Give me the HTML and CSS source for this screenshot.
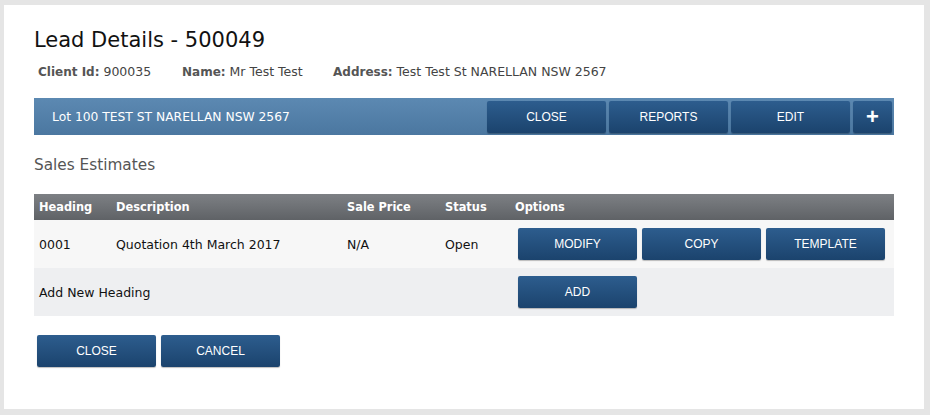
FILE: index.html
```html
<!DOCTYPE html>
<html lang="en">
<head>
    <meta charset="UTF-8">
    <meta name="viewport" content="width=device-width, initial-scale=1.0">
    <title>Lead Details - 500049</title>
    <link rel="stylesheet" href="styles.css">
</head>
<body>
    <div class="panel">
        <h1 class="titulo">Lead Details - 500049</h1>
        <div class="info">
            <span class="info-cliente"><b>Client Id:</b> 900035</span>
            <span class="info-nombre"><b>Name:</b> Mr Test Test</span>
            <span><b>Address:</b> Test Test St NARELLAN NSW 2567</span>
        </div>

        <!-- Barra del lote -->
        <div class="barra">
            <div class="barra-texto">Lot 100 TEST ST NARELLAN NSW 2567</div>
            <div class="barra-botones">
                <button class="btn">CLOSE</button>
                <button class="btn">REPORTS</button>
                <button class="btn">EDIT</button>
                <button class="btn btn-mas">+</button>
            </div>
        </div>

        <h2 class="subtitulo">Sales Estimates</h2>

        <table class="tabla">
            <thead>
                <tr>
                    <th class="col-heading">Heading</th>
                    <th class="col-desc">Description</th>
                    <th class="col-precio">Sale Price</th>
                    <th class="col-status">Status</th>
                    <th>Options</th>
                </tr>
            </thead>
            <tbody>
                <tr class="fila">
                    <td>0001</td>
                    <td>Quotation 4th March 2017</td>
                    <td>N/A</td>
                    <td>Open</td>
                    <td class="opciones">
                        <button class="btn">MODIFY</button>
                        <button class="btn">COPY</button>
                        <button class="btn">TEMPLATE</button>
                    </td>
                </tr>
                <tr class="fila fila-nueva">
                    <td colspan="4">Add New Heading</td>
                    <td class="opciones">
                        <button class="btn">ADD</button>
                    </td>
                </tr>
            </tbody>
        </table>

        <div class="pie">
            <button class="btn">CLOSE</button>
            <button class="btn">CANCEL</button>
        </div>
    </div>
</body>
</html>
```

FILE: styles.css
```css
body {
    margin: 0;
    padding: 5px 0 0 4px;
    background-color: #e5e5e5;
    font-family: "DejaVu Sans", "Noto Sans", sans-serif;
    color: #222;
}
.panel {
    width: 920px;
    height: 404px;
    box-sizing: border-box;
    background-color: #fff;
    padding: 22px 30px 0 30px;
}
.titulo {
    font-size: 21px;
    font-weight: normal;
    margin: 0;
    color: #111;
    line-height: 26px;
}
.info {
    margin: 11px 0 0 4px;
    font-size: 12.5px;
    color: #444;
    display: flex;
}
.info b {
    color: #555;
    font-size: 12px;
}
.info-cliente { width: 144px; }
.info-nombre { width: 151px; }
.barra {
    margin-top: 19px;
    height: 37px;
    width: 860px;
    display: flex;
    align-items: center;
    justify-content: space-between;
    background: linear-gradient(#5c89b2, #4b77a0);
}
.barra-texto {
    color: #fff;
    font-size: 12.3px;
    padding-left: 18px;
}
.barra-botones {
    display: flex;
    gap: 3px;
    padding-right: 2px;
}
.btn {
    width: 119px;
    height: 32px;
    border: none;
    border-radius: 2px;
    background: linear-gradient(#2d5d8e, #1b436d);
    color: #fff;
    font-family: "Liberation Sans", Arial, sans-serif;
    font-size: 12px;
    cursor: pointer;
    padding: 0;
    box-shadow: 0 1px 1px rgba(0, 0, 0, 0.25);
}
.btn-mas {
    width: 39px;
    font-size: 22px;
    font-weight: bold;
    line-height: 32px;
}
.subtitulo {
    font-size: 15.3px;
    font-weight: normal;
    color: #555;
    margin: 20px 0 0 0;
    line-height: 20px;
}
.tabla {
    margin-top: 19px;
    width: 860px;
    border-collapse: collapse;
    font-size: 12.5px;
}
.tabla th {
    background: linear-gradient(#7d8084, #5f6266);
    color: #fff;
    font-weight: bold;
    text-align: left;
    height: 26px;
    padding: 0 0 0 5px;
    font-size: 11.4px;
}
.col-heading { width: 72px; }
.col-desc { width: 226px; }
.col-precio { width: 93px; }
.col-status { width: 65px; }
.tabla td {
    height: 48px;
    padding: 0 0 0 5px;
    color: #111;
}
.fila {
    background-color: #f7f7f7;
}
.fila-nueva {
    background-color: #eeeff1;
}
.tabla td.opciones {
    padding-left: 8px;
    font-size: 0;
}
.opciones .btn {
    margin-right: 5px;
}
.pie {
    margin-top: 19px;
    padding-left: 3px;
    display: flex;
    gap: 5px;
}
```
